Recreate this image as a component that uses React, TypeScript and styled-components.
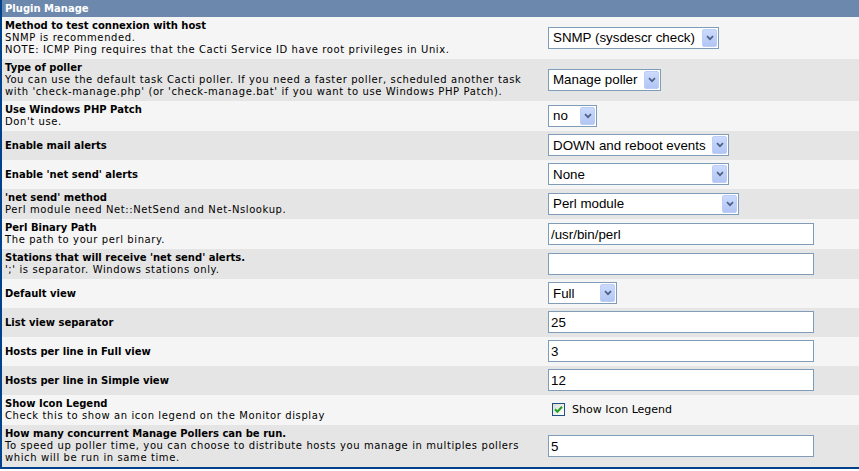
import styled, { createGlobalStyle } from 'styled-components';

const GlobalStyle = createGlobalStyle`
    html, body {
        margin: 0;
        padding: 0;
        background: #ffffff;
        overflow: hidden;
    }
`;

type Control =
    | { kind: 'select'; value: string; width: number }
    | { kind: 'text'; value: string }
    | { kind: 'check'; label: string };

interface SettingRow {
    title: string;
    desc?: string[];
    control: Control;
}

const rows: SettingRow[] = [
    {
        title: 'Method to test connexion with host',
        desc: [
            'SNMP is recommended.',
            'NOTE: ICMP Ping requires that the Cacti Service ID have root privileges in Unix.',
        ],
        control: { kind: 'select', value: 'SNMP (sysdescr check)', width: 171 },
    },
    {
        title: 'Type of poller',
        desc: [
            'You can use the default task Cacti poller. If you need a faster poller, scheduled another task',
            "with 'check-manage.php' (or 'check-manage.bat' if you want to use Windows PHP Patch).",
        ],
        control: { kind: 'select', value: 'Manage poller', width: 113 },
    },
    {
        title: 'Use Windows PHP Patch',
        desc: ["Don't use."],
        control: { kind: 'select', value: 'no', width: 49 },
    },
    {
        title: 'Enable mail alerts',
        control: { kind: 'select', value: 'DOWN and reboot events', width: 181 },
    },
    {
        title: "Enable 'net send' alerts",
        control: { kind: 'select', value: 'None', width: 181 },
    },
    {
        title: "'net send' method",
        desc: ['Perl module need Net::NetSend and Net-Nslookup.'],
        control: { kind: 'select', value: 'Perl module', width: 191 },
    },
    {
        title: 'Perl Binary Path',
        desc: ['The path to your perl binary.'],
        control: { kind: 'text', value: '/usr/bin/perl' },
    },
    {
        title: "Stations that will receive 'net send' alerts.",
        desc: ["';' is separator. Windows stations only."],
        control: { kind: 'text', value: '' },
    },
    {
        title: 'Default view',
        control: { kind: 'select', value: 'Full', width: 69 },
    },
    {
        title: 'List view separator',
        control: { kind: 'text', value: '25' },
    },
    {
        title: 'Hosts per line in Full view',
        control: { kind: 'text', value: '3' },
    },
    {
        title: 'Hosts per line in Simple view',
        control: { kind: 'text', value: '12' },
    },
    {
        title: 'Show Icon Legend',
        desc: ['Check this to show an icon legend on the Monitor display'],
        control: { kind: 'check', label: 'Show Icon Legend' },
    },
    {
        title: 'How many concurrent Manage Pollers can be run.',
        desc: [
            'To speed up poller time, you can choose to distribute hosts you manage in multiples pollers',
            'which will be run in same time.',
        ],
        control: { kind: 'text', value: '5' },
    },
];

const FakeSelect = ({ value, width }: { value: string; width: number }) => (
    <SelectBox style={{ width }}>
        <SelectValue>{value}</SelectValue>
        <ArrowButton>
            <svg width="8" height="6" viewBox="0 0 8 6">
                <path
                    d="M1 1.2 L4 4.2 L7 1.2"
                    fill="none"
                    stroke="#4d6185"
                    strokeWidth="1.7"
                />
            </svg>
        </ArrowButton>
    </SelectBox>
);

const CheckMark = () => (
    <CheckBox>
        <svg width="9" height="9" viewBox="0 0 9 9">
            <path
                d="M1 4.3 L3.4 6.7 L8 1.8"
                fill="none"
                stroke="#21a121"
                strokeWidth="2"
            />
        </svg>
    </CheckBox>
);

const renderControl = (control: Control) => {
    switch (control.kind) {
        case 'select':
            return <FakeSelect value={control.value} width={control.width} />;
        case 'text':
            return <TextInput type="text" defaultValue={control.value} />;
        case 'check':
            return (
                <CheckLabel>
                    <CheckMark />
                    {control.label}
                </CheckLabel>
            );
    }
};

const App = () => {
    return (
        <>
            <GlobalStyle />
            <Panel>
                <Header>Plugin Manage</Header>
                {rows.map((row, i) => (
                    <Row key={`setting_${i}`} alt={i % 2 === 1}>
                        <LabelCell>
                            <Title>{row.title}</Title>
                            {row.desc?.map((line, j) => (
                                <Line key={`line_${j}`}>{line}</Line>
                            ))}
                        </LabelCell>
                        <ControlCell>{renderControl(row.control)}</ControlCell>
                    </Row>
                ))}
            </Panel>
        </>
    );
};

const Panel = styled.div`
    width: 1090px;
    border-left: 2px solid #00438c;
    border-bottom: 2px solid #00438c;
    font-family: 'DejaVu Sans', Verdana, sans-serif;
    font-size: 10px;
    color: #000000;
`;

const Header = styled.div`
    height: 17px;
    line-height: 17px;
    padding-left: 3px;
    background-color: #6d88ad;
    color: #ffffff;
    font-weight: bold;
`;

const Row = styled.div<{ alt: boolean }>`
    display: grid;
    grid-template-columns: 543px 1fr;
    align-items: center;
    background-color: ${(p) => (p.alt ? '#e5e5e5' : '#f5f5f5')};
`;

const LabelCell = styled.div`
    padding: 3px;
    line-height: 12px;
`;

const Title = styled.div`
    font-weight: bold;
    white-space: nowrap;
`;

const Line = styled.div`
    white-space: nowrap;
    letter-spacing: 0.6px;
`;

const ControlCell = styled.div`
    display: flex;
    align-items: center;
    padding: 3px 3px 4px;
`;

const SelectBox = styled.div`
    box-sizing: border-box;
    display: flex;
    align-items: center;
    height: 22px;
    border: 1px solid #7f9db9;
    background: #ffffff;
    font-family: 'Liberation Sans', Arial, sans-serif;
    font-size: 13.33px;
`;

const SelectValue = styled.span`
    flex: 1;
    padding-left: 4px;
    white-space: nowrap;
    overflow: hidden;
`;

const ArrowButton = styled.span`
    box-sizing: border-box;
    display: flex;
    align-items: center;
    justify-content: center;
    width: 15px;
    height: 18px;
    margin-right: 1px;
    border: 1px solid #bccdf6;
    border-radius: 2px;
    background: linear-gradient(#cbdafd, #b2c6f4);
`;

const TextInput = styled.input`
    box-sizing: border-box;
    width: 266px;
    height: 22px;
    margin: 0;
    padding: 1px 2px 0;
    border: 1px solid #7f9db9;
    background: #ffffff;
    font-family: 'Liberation Sans', Arial, sans-serif;
    font-size: 13.33px;
    color: #000000;
    outline: none;
`;

const CheckLabel = styled.label`
    display: flex;
    align-items: center;
    gap: 7px;
    padding-left: 4px;
    font-size: 11px;
    height: 22px;
`;

const CheckBox = styled.span`
    box-sizing: border-box;
    display: flex;
    align-items: center;
    justify-content: center;
    width: 13px;
    height: 13px;
    border: 1px solid #1c5180;
    background: linear-gradient(135deg, #dcdcd7, #ffffff);
`;

export default App;
